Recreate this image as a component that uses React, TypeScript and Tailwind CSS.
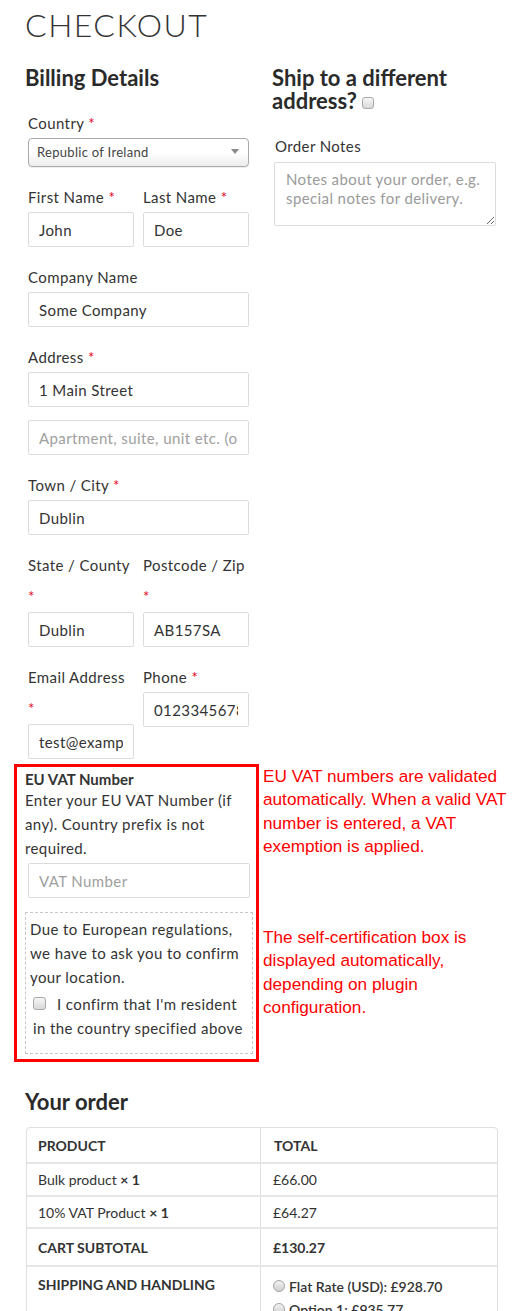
import React from "react";

const Req = () => <span className="text-[#e2001a]">*</span>;

const inputCls =
  "block w-full h-[35px] border border-[#dcdcdc] rounded-[2px] px-[10px] text-[15px] tracking-[0.4px] text-[#333] bg-white outline-none placeholder:text-[#a0a0a0] font-['Lato',sans-serif]";

const labelCls = "block text-[15px] tracking-[0.4px] leading-[24px] text-[#333] whitespace-nowrap";

function Label({ children, req }: { children: React.ReactNode; req?: boolean }) {
  return (
    <div className={labelCls}>
      {children}
      {req ? <> <Req /></> : null}
    </div>
  );
}

function AstLine() {
  return (
    <div className="h-[32px] pt-[7px] text-[15px] leading-[24px]">
      <Req />
    </div>
  );
}

function Checkbox({ cls = "" }: { cls?: string }) {
  return (
    <span
      className={
        "inline-block w-[13px] h-[13px] rounded-[3px] border border-[#a9a9a9] bg-linear-to-b from-[#f6f6f6] to-[#d9d9d9] " +
        cls
      }
    />
  );
}

function Radio() {
  return (
    <span className="inline-block w-[12px] h-[12px] rounded-full border border-[#a5a5a5] bg-linear-to-b from-[#f2f2f2] to-[#cfcfcf] mr-[4px]" />
  );
}

export default function App() {
  return (
    <div className="w-[516px] bg-white text-[#333] font-['Lato',sans-serif]">
      {/* Header */}
      <div className="pl-[25px] pt-[5px]">
        <h1 className="text-[32px] leading-[40px] font-light tracking-[1.5px] text-[#333]">CHECKOUT</h1>
      </div>

      {/* Columns */}
      <div className="flex pl-[25px] mt-[21px]">
        {/* Left */}
        <div className="w-[227px]">
          <h3 className="text-[22px] leading-[23px] font-bold text-[#2a2a2a]">Billing Details</h3>

          <div className="px-[3px] mt-[22px]">
            <Label req>Country</Label>
            <div className="relative mt-[3px] h-[29px] border border-[#aaa] rounded-[4px] bg-linear-to-t from-[#ececec] via-[#fff] via-50% to-[#fff] shadow-[0_1px_1px_rgba(0,0,0,0.08)] flex items-center pl-[8px] text-[13px] tracking-[0.3px] text-[#444]">
              Republic of Ireland
              <span className="absolute right-[9px] top-[10px] w-0 h-0 border-l-[4px] border-r-[4px] border-t-[5px] border-l-transparent border-r-transparent border-t-[#888]" />
            </div>
          </div>

          <div className="px-[3px] mt-[18px] flex gap-[9px]">
            <div className="w-[106px]">
              <Label req>First Name</Label>
              <input className={inputCls + " mt-[3px]"} defaultValue="John" />
            </div>
            <div className="w-[106px]">
              <Label req>Last Name</Label>
              <input className={inputCls + " mt-[3px]"} defaultValue="Doe" />
            </div>
          </div>

          <div className="px-[3px] mt-[18px]">
            <Label>Company Name</Label>
            <input className={inputCls + " mt-[3px]"} defaultValue="Some Company" />
          </div>

          <div className="px-[3px] mt-[18px]">
            <Label req>Address</Label>
            <input className={inputCls + " mt-[3px]"} defaultValue="1 Main Street" />
            <input className={inputCls + " mt-[13px]"} placeholder="Apartment, suite, unit etc. (optional)" />
          </div>

          <div className="px-[3px] mt-[18px]">
            <Label req>Town / City</Label>
            <input className={inputCls + " mt-[3px]"} defaultValue="Dublin" />
          </div>

          <div className="px-[3px] mt-[18px] flex gap-[9px]">
            <div className="w-[106px]">
              <Label>State / County</Label>
              <AstLine />
              <input className={inputCls + " mt-[3px]"} defaultValue="Dublin" />
            </div>
            <div className="w-[106px]">
              <Label>Postcode / Zip</Label>
              <AstLine />
              <input className={inputCls + " mt-[3px]"} defaultValue="AB157SA" />
            </div>
          </div>

          <div className="px-[3px] mt-[18px] flex gap-[9px] items-start">
            <div className="w-[106px]">
              <Label>Email Address</Label>
              <AstLine />
              <input className={inputCls + " mt-[3px]"} defaultValue="test@example.com" />
            </div>
            <div className="w-[106px]">
              <Label req>Phone</Label>
              <input className={inputCls + " mt-[3px]"} defaultValue="0123345678" />
            </div>
          </div>
        </div>

        {/* Right */}
        <div className="ml-[20px] w-[225px]">
          <h3 className="text-[22px] leading-[23px] font-bold text-[#2a2a2a]">
            Ship to a different
            <br />
            address?
            <Checkbox cls="ml-[5px] !w-[12px] !h-[12px]" />
          </h3>
          <div className="mt-[22px] ml-[3px]">
            <div className={labelCls}>Order Notes</div>
          </div>
          <textarea
            className="block mt-[4px] ml-[2px] w-[222px] h-[64px] border border-[#dcdcdc] rounded-[2px] pl-[11px] pr-[6px] pt-[7px] text-[15px] tracking-[0.4px] leading-[19px] text-[#333] outline-none placeholder:text-[#9a9a9a] font-['Lato',sans-serif]"
            placeholder="Notes about your order, e.g. special notes for delivery."
          />
        </div>
      </div>

      {/* VAT row */}
      <div className="flex pl-[14px] mt-[5px]">
        <div className="w-[245px] border-[3px] border-[#ff0000] pl-[8px] pr-[3px] pt-[3px] pb-[5px]">
          <div className="text-[15px] leading-[18px] font-bold text-[#333]">EU VAT Number</div>
          <div className="text-[15px] tracking-[0.4px] leading-[24px] text-[#333] whitespace-nowrap">
            Enter your EU VAT Number (if
            <br />
            any). Country prefix is not
            <br />
            required.
          </div>
          <div className="px-[3px] mt-[3px]">
            <input className={inputCls} placeholder="VAT Number" />
          </div>
          <div className="mt-[14px] h-[142px] border border-dashed border-[#c8c8c8] pl-[4px] pt-[4px]">
            <div className="text-[15px] tracking-[0.4px] leading-[24px] text-[#333] whitespace-nowrap">
              Due to European regulations,
              <br />
              we have to ask you to confirm
              <br />
              your location.
            </div>
            <div className="mt-[3px] pl-[3px] text-[15px] tracking-[0.4px] leading-[24px] text-[#333] whitespace-nowrap">
              <Checkbox cls="mr-[11px]" />
              I confirm that I'm resident
              <br />
              in the country specified above
            </div>
          </div>
        </div>
        <div className="ml-[4px] pt-[1px] text-[17.2px] leading-[23.3px] text-[#ff0000] font-['Liberation_Sans',Arial,sans-serif] whitespace-nowrap">
          <div>
            EU VAT numbers are validated
            <br />
            automatically. When a valid VAT
            <br />
            number is entered, a VAT
            <br />
            exemption is applied.
          </div>
          <div className="mt-[68px]">
            The self-certification box is
            <br />
            displayed automatically,
            <br />
            depending on plugin
            <br />
            configuration.
          </div>
        </div>
      </div>

      {/* Order */}
      <div className="pl-[25px] mt-[28px]">
        <h3 className="text-[22px] leading-[23px] font-bold text-[#2a2a2a]">Your order</h3>
      </div>
      <div className="ml-[26px] mt-[14px] w-[472px] border border-[#e0e0e0] rounded-[4px] text-[14px] text-[#333]">
        <div className="flex h-[34px]">
          <div className="w-[233px] pl-[11px] flex items-center font-bold">PRODUCT</div>
          <div className="flex-1 border-l border-[#e0e0e0] pl-[13px] flex items-center font-bold">TOTAL</div>
        </div>
        <div className="flex h-[33px] border-t-2 border-[#e6e6e6]">
          <div className="w-[233px] pl-[11px] flex items-center">
            Bulk product&nbsp;<b>× 1</b>
          </div>
          <div className="flex-1 border-l border-[#e0e0e0] pl-[12px] flex items-center">£66.00</div>
        </div>
        <div className="flex h-[32px] border-t-2 border-[#e6e6e6]">
          <div className="w-[233px] pl-[11px] flex items-center">
            10% VAT Product&nbsp;<b>× 1</b>
          </div>
          <div className="flex-1 border-l border-[#e0e0e0] pl-[12px] flex items-center">£64.27</div>
        </div>
        <div className="flex h-[38px] border-t-2 border-[#e6e6e6]">
          <div className="w-[233px] pl-[11px] flex items-center font-bold">CART SUBTOTAL</div>
          <div className="flex-1 border-l border-[#e0e0e0] pl-[12px] flex items-center font-bold">£130.27</div>
        </div>
        <div className="flex border-t-2 border-[#e6e6e6]">
          <div className="w-[233px] pl-[11px] pt-[8px] leading-[20px] font-bold">SHIPPING AND HANDLING</div>
          <div className="flex-1 border-l border-[#e0e0e0] pl-[12px] pt-[8px] pb-[10px] leading-[23px] font-semibold">
            <div>
              <Radio />
              Flat Rate (USD): £928.70
            </div>
            <div>
              <Radio />
              Option 1: £935.77
            </div>
            <div>
              <Radio />
              Option 2: £940.12
            </div>
          </div>
        </div>
      </div>
      <div className="h-[40px]" />
    </div>
  );
}
